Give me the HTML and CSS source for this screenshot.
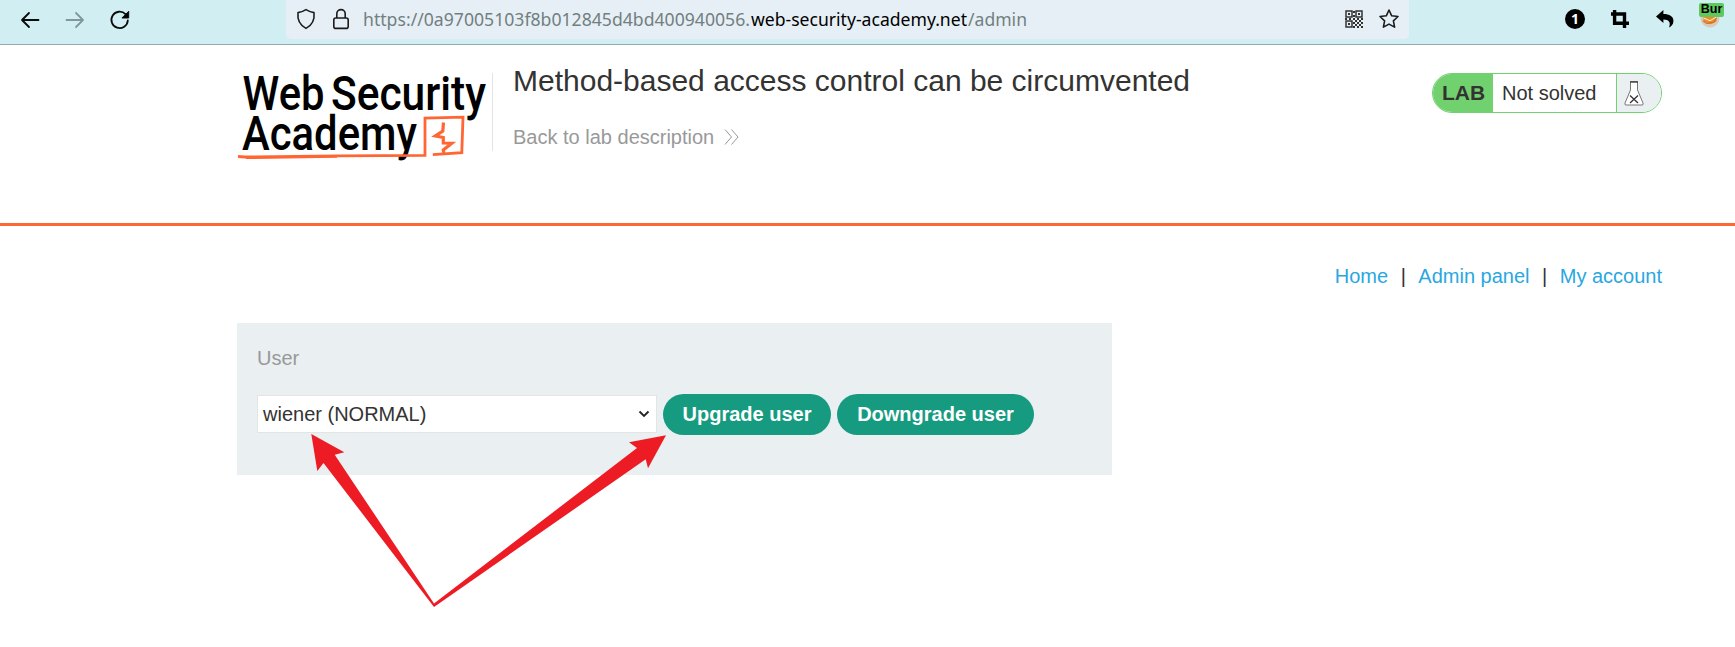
FILE: index.html
```
<!DOCTYPE html>
<html lang="en">
<head>
<meta charset="utf-8">
<title>Method-based access control can be circumvented</title>
<link rel="stylesheet" href="styles.css">
</head>
<body>
<div class="toolbar">
  <div class="nav-icons">
    <svg width="20" height="20" viewBox="0 0 20 20" class="stroke"><path d="M18.500 10H2M9 3L2 10l7 7"/></svg>
    <svg width="20" height="20" viewBox="0 0 20 20" class="stroke faded"><path d="M1.500 10H18M11 3l7 7-7 7"/></svg>
    <svg width="20" height="20" viewBox="0 0 20 20" class="stroke"><path d="M17.800 10.500A8.200 8.200 0 1 1 15.500 4.200"/><path class="solid" d="M18.700 1.600V8h-6.400z"/></svg>
  </div>
  <div class="address">
    <svg class="shield" width="20" height="22" viewBox="0 0 20 22"><path d="M10 1.600Q14 4 18 4.600Q19.200 15.500 10 20.400Q.8 15.500 2 4.600Q6 4 10 1.600z"/></svg>
    <svg class="lock" width="18" height="22" viewBox="0 0 18 22"><rect x="1.800" y="10" width="14.400" height="10.400" rx="2"/><path d="M4.800 10V5.800a4.200 4.200 0 0 1 8.400 0V10"/></svg>
    <svg class="url" width="670" height="38"><text x="-1" y="26" class="dim" textLength="387" lengthAdjust="spacingAndGlyphs">https://0a97005103f8b012845d4bd400940056.</text><text x="387" y="26" textLength="216" lengthAdjust="spacingAndGlyphs">web-security-academy.net</text><text x="604" y="26" class="dim" textLength="59" lengthAdjust="spacingAndGlyphs">/admin</text></svg>
    <svg class="qr" width="18" height="18" viewBox="0 0 18 18"><path d="M1 1h6v6H1zM11 1h6v6h-6zM1 11h6v6H1z" fill="none" stroke="#333" stroke-width="1.500"/><path d="M3 3h2v2H3zM13 3h2v2h-2zM3 13h2v2H3zM8 1h2v2H8zM8 5h2v2H8zM0 8h2v2H0zM4 8h2v2H4zM8 8h2v2H8zM12 8h2v2h-2zM16 8h2v2h-2zM10 10h2v2h-2zM14 10h2v2h-2zM8 12h2v2H8zM12 12h2v2h-2zM16 12h2v2h-2zM10 14h2v2h-2zM14 14h2v2h-2zM8 16h2v2H8zM12 16h2v2h-2zM16 16h2v2h-2z" fill="#333"/></svg>
    <svg class="star" width="22" height="22" viewBox="0 0 22 22"><path d="M11 2l2.700 5.800 6.300.7-4.600 4.300 1.200 6.300-5.600-3-5.600 3 1.200-6.300L2 8.500l6.300-.7z"/></svg>
  </div>
  <div class="extensions">
    <svg width="20" height="20" viewBox="0 0 20 20"><circle cx="10" cy="10" r="10"/><text x="10" y="15" class="one">1</text></svg>
    <svg class="crop" width="18" height="18" viewBox="0 0 18 18"><path d="M3.600 0v13.200H18M0 4h13.500v14" fill="none" stroke="#000" stroke-width="3.400"/></svg>
    <svg class="undo" width="18" height="18" viewBox="0 0 18 18"><path d="M0 6.500L7.400 0v4C13.500 4 18 6.500 17.400 11.500c-.2 2.800-1.800 4.800-4.400 6.100 2-4.800.2-8-5.600-8V13z"/></svg>
    <div class="proxy">
      <svg width="20" height="20" viewBox="0 0 22 22"><circle cx="11" cy="11" r="10.500" fill="#d9cabb"/><path d="M3 5l8 4 8-4-1 10-7 3-7-3z" fill="#f28a23"/><path d="M4 11l7 3 7-4" fill="none" stroke="#fff"/><path d="M3 14l4 3 8-1 3-5" fill="none" stroke="#ba672c"/></svg>
      <span class="proxy-label">Bur</span>
    </div>
  </div>
</div>
<header class="lab-header">
  <svg class="logo" width="256" height="92" viewBox="0 0 256 92">
    <g class="wordmark"><text x="5.500" y="41.500" textLength="82" lengthAdjust="spacingAndGlyphs">Web</text><text x="94" y="41.500" textLength="155" lengthAdjust="spacingAndGlyphs">Security</text><text x="5" y="82" textLength="175" lengthAdjust="spacingAndGlyphs">Academy</text></g>
    <path d="M1 88.500L8 89l94-1.200 86-.5V50.200L226 49.200l-1.200 35.500-29 2" fill="none" stroke="#ff6633" stroke-width="2.800"/>
    <path d="M9 90.300L100 89" stroke="#ff6633" stroke-width="1.500"/>
    <path d="M206.500 54.500l-.7 8.500-7.500 5 8 1.500v5.500l8.500.2-8.500 6.800.8 4.500" fill="none" stroke="#ff6633" stroke-width="3.200"/>
  </svg>
  <div class="title">
    <h1>Method-based access control can be circumvented</h1>
    <a class="back">Back to lab description<svg width="15" height="16" viewBox="0 0 15 16"><path d="M1 .5L7.500 8 1 15.500M7.500 .5L14 8l-6.500 7.500"/></svg></a>
  </div>
  <div class="status">
    <b>LAB</b><span>Not solved</span>
    <i><svg width="20" height="25" viewBox="0 0 20 25"><path d="M6.500 1v8L1 22q-.6 2 1 2h16q1.600 0 1-2L13.500 9V1z" fill="#fff" stroke="#777"/><path d="M6 .8h8M6 14.500l8 7.500M14 14.500L6 22" fill="none" stroke="#333" stroke-width="1.300"/></svg></i>
  </div>
</header>
<main>
  <nav><a>Home</a><span>|</span><a>Admin panel</a><span>|</span><a>My account</a></nav>
  <form class="panel">
    <label>User</label>
    <div class="controls">
      <div class="select">wiener (NORMAL)<svg width="12" height="8" viewBox="0 0 12 8"><path d="M1.500 1.500L6 6l4.500-4.500"/></svg></div>
      <button type="button">Upgrade user</button>
      <button type="button" class="wide">Downgrade user</button>
    </div>
  </form>
</main>
<svg class="arrows" width="380" height="190" viewBox="300 425 380 190"><path d="M311.300 434l33 18.300-9.600 2.400L434 603.500l203-155.500-8-5.700 37-7-18 33-2.300-9L434 607 323.500 463l-6.200 8z"/></svg>
</body>
</html>
```
FILE: styles.css
```
* { box-sizing: border-box; }
body { margin: 0; height: 647px; overflow: hidden; background: #fff; color: #333332; font: 20px/24px "Liberation Sans", Arial, sans-serif; position: relative; }
svg { display: block; flex: none; overflow: visible; }
.toolbar { height: 45px; background: #d1eff2; border-bottom: 1px solid #94a9ab; display: flex; }
.nav-icons { width: 286px; display: flex; gap: 25px; padding: 10px 0 0 20px; }
.stroke { fill: none; stroke: #0a0a0a; stroke-width: 1.8; stroke-linecap: round; stroke-linejoin: round; }
.faded { stroke: #819799; }
.stroke .solid { fill: #000; stroke-width: 1; }
.address { width: 1123px; height: 39px; background: #e7eff6; border-radius: 0 0 5px 5px; display: flex; }
.shield, .lock, .star { fill: none; stroke: #1b1b1b; stroke-width: 1.6; stroke-linejoin: round; }
.shield { margin: 8px 0 0 10px; }
.lock { margin: 8px 0 0 16px; }
.url { margin-left: 14px; font: 18.7px "Noto Sans", sans-serif; }
.dim { fill: #71807f; }
.qr { margin: 10px 0 0 311px; }
.star { margin: 8px 0 0 15px; }
.extensions { display: flex; padding: 9px 0 0 156px; gap: 27px; }
.crop { margin-left: -1px; margin-top: 1px; }
.undo { margin-top: 1px; }
.one { fill: #fff; font: bold 14px "Noto Sans", sans-serif; text-anchor: middle; }
.proxy { position: relative; width: 25px; margin: -1px 0 0 -1px; }
.proxy-label { position: absolute; top: -5px; left: -1px; width: 25px; height: 14px; background: #5fc95f; border-radius: 2px; color: #000; font: bold 12.5px/13px "Liberation Sans", sans-serif; text-align: center; }
.lab-header { height: 181px; border-bottom: 3px solid #ff6633; padding-left: 237px; display: flex; }
.logo { margin-top: 23px; }
.wordmark { font: 500 48px Roboto, sans-serif; fill: #000; }
.title { height: 78px; margin-top: 28px; border-left: 1px solid #e4e4e4; padding-left: 20px; width: 940px; margin-left: -1px; }
h1 { margin: -9px 0 0; font-size: 30px; line-height: 34px; font-weight: 400; }
.back { display: flex; align-items: center; gap: 10px; margin-top: 27px; color: #999; }
.back svg, .select svg { fill: none; stroke: #999; }
.status { width: 230px; height: 40px; margin-top: 28px; display: flex; border: 1px solid #72d16f; border-radius: 20px; overflow: hidden; line-height: 38px; }
.status b { width: 60px; background: #72d16f; padding-left: 9px; font-size: 21px; }
.status span { width: 123px; padding-left: 9px; }
.status i { flex: 1; border-left: 1px solid #72d16f; background: #eaeff2; padding: 7px 0 0 7px; }
main { padding: 38px 73px 0 237px; }
nav { display: flex; justify-content: flex-end; gap: 12.5px; }
nav a { color: #29a7df; }
.panel { width: 875px; height: 152px; margin-top: 35px; padding: 23px 20px; background: #eaeff2; }
label { display: block; color: #999; }
.controls { display: flex; align-items: flex-start; gap: 6px; margin-top: 24px; height: 41px; }
.select { width: 400px; height: 38px; margin-top: 1px; background: #fff; border: 1px solid #e4e4e4; padding: 0 6px 0 5px; display: flex; align-items: center; justify-content: space-between; }
.select svg { stroke: #222; stroke-width: 1.8; }
button { width: 168px; height: 41px; border: 0; border-radius: 21px; padding: 0; background: #179b80; color: #fff; font: bold 20px "Liberation Sans", Arial, sans-serif; }
button.wide { width: 197px; }
.arrows { position: absolute; left: 300px; top: 425px; fill: #ed1c24; }
```
